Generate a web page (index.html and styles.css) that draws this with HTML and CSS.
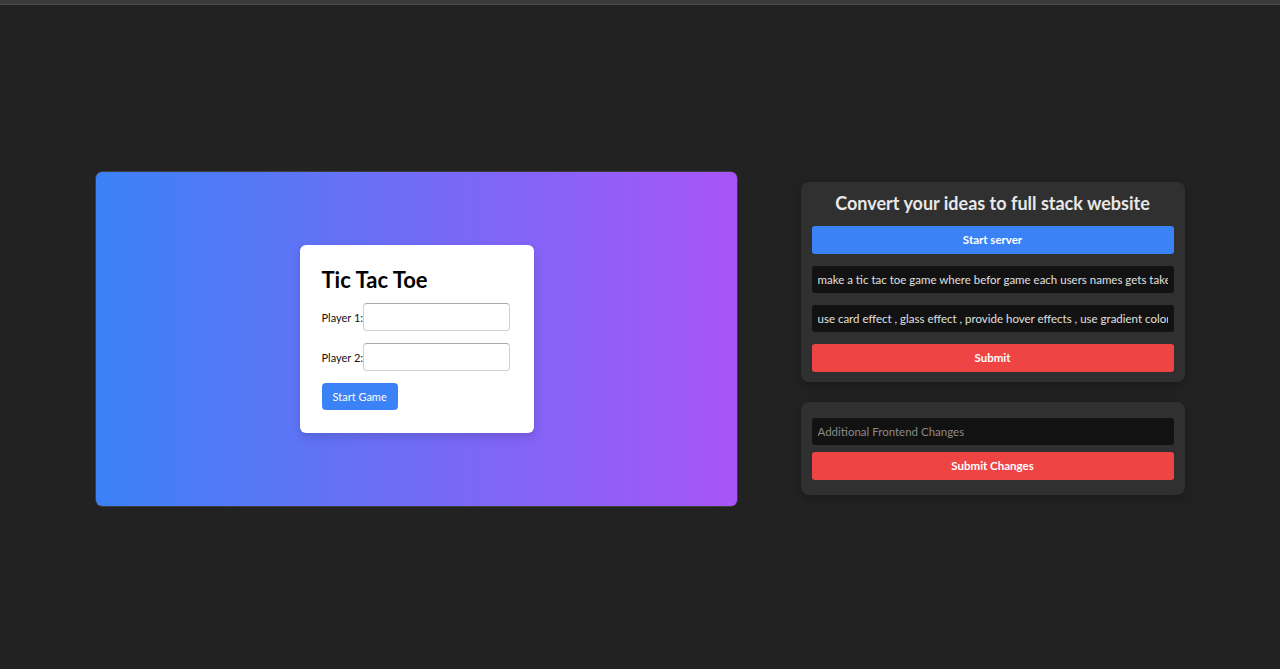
FILE: index.html
```
<!DOCTYPE html>
<html>
<head>
<meta charset="utf-8">
<link rel="stylesheet" href="styles.css">
</head>
<body>
<div class="topbar"></div>
<main class="main">
  <section class="preview">
    <div class="game-card">
      <h1 class="game-title">Tic Tac Toe</h1>
      <div class="field"><label class="field-label">Player 1:</label><input class="field-input" type="text"></div>
      <div class="field"><label class="field-label">Player 2:</label><input class="field-input" type="text"></div>
      <button class="start-btn">Start Game</button>
    </div>
  </section>
  <aside class="side">
    <div class="panel">
      <h2 class="panel-title">Convert your ideas to full stack website</h2>
      <button class="btn btn-blue">Start server</button>
      <input class="dark-input" type="text" value="make a tic tac toe game where befor game each users names gets taken and then game starts">
      <input class="dark-input" type="text" value="use card effect , glass effect , provide hover effects , use gradient coloring">
      <button class="btn btn-red">Submit</button>
    </div>
    <div class="panel panel-small">
      <input class="dark-input" type="text" placeholder="Additional Frontend Changes">
      <button class="btn btn-red">Submit Changes</button>
    </div>
  </aside>
</main>
</body>
</html>
```
FILE: styles.css
```
html, body {
  margin: 0;
  padding: 0;
  height: 100%;
}
body {
  background: #222222;
  font-family: "Lato", "Noto Sans", sans-serif;
  display: flex;
  flex-direction: column;
}
.topbar {
  height: 4px;
  background: #3c3c3c;
  border-bottom: 1px solid #4a4a4a;
  flex: none;
}
.main {
  flex: 1;
  display: flex;
  align-items: center;
  justify-content: center;
  gap: 64px;
  padding-top: 4px;
}
.preview {
  width: 641px;
  height: 334px;
  border-radius: 6px;
  background: linear-gradient(90deg, #3b82f6, #a855f7);
  display: flex;
  align-items: center;
  justify-content: center;
  box-shadow: 0 0 0 0.5px rgba(255,255,255,0.25);
}
.game-card {
  background: #fff;
  border-radius: 6px;
  width: 234px;
  box-sizing: border-box;
  padding: 22px 22px 23px;
  box-shadow: 0 4px 10px rgba(0,0,0,0.15);
  margin-left: 1px;
}
.game-title {
  margin: 0 0 10px;
  font-size: 22px;
  font-weight: 700;
  color: #000;
  line-height: 26px;
}
.field {
  display: flex;
  align-items: center;
  margin-bottom: 12px;
}
.field-label {
  font-size: 11px;
  color: #111;
  white-space: nowrap;
  flex: none;
}
.field-input {
  width: 147px;
  height: 28px;
  box-sizing: border-box;
  border: 1px solid #d0d0d0;
  border-top-color: #a8a8a8;
  border-radius: 4px;
  margin: 0;
  padding: 0 6px;
}
.start-btn {
  background: #3b82f6;
  color: #fff;
  border: none;
  border-radius: 4px;
  height: 27px;
  padding: 0 11px;
  font-family: inherit;
  font-size: 11px;
}
.side {
  width: 384px;
  display: flex;
  flex-direction: column;
  gap: 20px;
  margin-bottom: 2px;
}
.panel {
  background: #303030;
  border-radius: 8px;
  padding: 8px 11px 10px;
  display: flex;
  flex-direction: column;
  gap: 12px;
  box-shadow: 0 4px 12px rgba(0,0,0,0.25);
}
.panel-small {
  padding: 16px 11px 15px;
  gap: 7px;
}
.panel-title {
  margin: 0 0 -2px;
  text-align: center;
  color: #e8e8e8;
  font-size: 18px;
  font-weight: 700;
  line-height: 26px;
}
.btn {
  height: 28px;
  border: none;
  border-radius: 3px;
  color: #fff;
  font-family: inherit;
  font-size: 11.5px;
  font-weight: 700;
}
.btn-blue { background: #3b82f6; }
.btn-red { background: #ef4444; }
.dark-input {
  height: 27px;
  box-sizing: border-box;
  background: #121212;
  border: none;
  border-radius: 3px;
  color: #e0e0e0;
  font-family: inherit;
  font-size: 11.5px;
  padding: 0 6px;
  margin: 0;
  outline: none;
}
.dark-input::placeholder {
  color: #8a8a8a;
}
```
